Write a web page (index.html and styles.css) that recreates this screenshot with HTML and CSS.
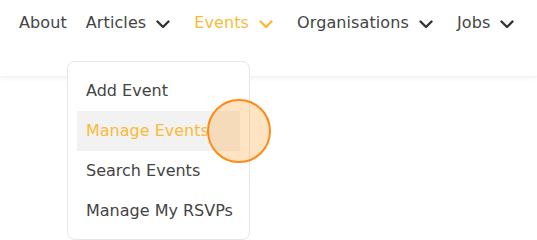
FILE: index.html
```html
<!DOCTYPE html>
<html>
<head>
<meta charset="utf-8">
<link rel="stylesheet" href="styles.css">
</head>
<body>
<header class="header">
  <nav class="nav">
    <a class="nav-item plain">About</a>
    <a class="nav-item">Articles <svg class="chev" viewBox="0 0 14 9"><path d="M1.5 1.5 L7 7 L12.5 1.5"/></svg></a>
    <a class="nav-item active">Events <svg class="chev" viewBox="0 0 14 9"><path d="M1.5 1.5 L7 7 L12.5 1.5"/></svg></a>
    <a class="nav-item">Organisations <svg class="chev" viewBox="0 0 14 9"><path d="M1.5 1.5 L7 7 L12.5 1.5"/></svg></a>
    <a class="nav-item">Jobs <svg class="chev" viewBox="0 0 14 9"><path d="M1.5 1.5 L7 7 L12.5 1.5"/></svg></a>
  </nav>
</header>
<div class="dropdown">
  <div class="dd-item">Add Event</div>
  <div class="dd-item hover">Manage Events</div>
  <div class="dd-item">Search Events</div>
  <div class="dd-item">Manage My RSVPs</div>
</div>
<div class="cursor"></div>
</body>
</html>
```
FILE: styles.css
```css
html, body {
  margin: 0;
  padding: 0;
  background: #fff;
  width: 537px;
  height: 240px;
  overflow: hidden;
  font-family: "DejaVu Sans", sans-serif;
  color: #444;
}
.header {
  height: 77px;
  box-shadow: 0 1px 5px rgba(0,0,0,0.06);
  border-bottom: 1px solid #f3f3f3;
  box-sizing: border-box;
}
.nav {
  display: flex;
  align-items: center;
  padding: 11px 0 0 19px;
  height: 24px;
  gap: 24px;
}
.nav-item {
  display: flex;
  align-items: center;
  gap: 10px;
  font-size: 16px;
  line-height: 24px;
  white-space: nowrap;
  letter-spacing: 0.1px;
}
.nav-item.plain {
  margin-right: -5px;
}
.nav-item.active {
  color: #fbba35;
}
.chev {
  width: 14px;
  height: 9px;
  margin-top: 3px;
  fill: none;
  stroke: #333;
  stroke-width: 2.4;
  stroke-linecap: round;
  stroke-linejoin: round;
}
.nav-item.active .chev {
  stroke: #fbba35;
}
.dropdown {
  position: absolute;
  left: 67px;
  top: 61px;
  width: 183px;
  box-sizing: border-box;
  background: #fff;
  border: 1px solid #e6e6e6;
  border-radius: 8px;
  padding: 9px 9px 8px;
  z-index: 2;
}
.dd-item {
  height: 40px;
  line-height: 39px;
  padding-left: 9px;
  font-size: 16px;
  white-space: nowrap;
  letter-spacing: 0;
}
.dd-item.hover {
  background: #f2f2f2;
  color: #fbba35;
}
.cursor {
  position: absolute;
  left: 207px;
  top: 99px;
  width: 60px;
  height: 60px;
  border-radius: 50%;
  border: 2.5px solid #ff8a12;
  background: rgba(255, 170, 70, 0.32);
  z-index: 3;
}
```
